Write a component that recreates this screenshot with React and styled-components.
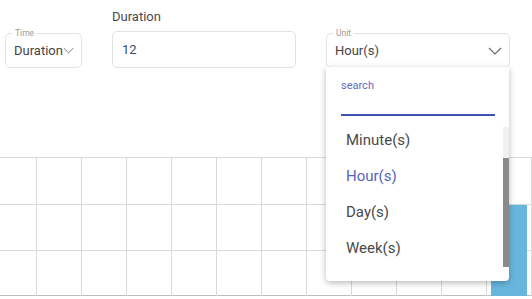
import React from "react";
import styled, { createGlobalStyle } from "styled-components";

const GlobalStyle = createGlobalStyle`
  html, body {
    margin: 0;
    padding: 0;
    background: #fff;
    font-family: Roboto, "Liberation Sans", sans-serif;
  }
`;

const Page = styled.div`
  position: relative;
  width: 532px;
  height: 299px;
  overflow: hidden;
  background: #fff;
`;

const Toolbar = styled.div`
  display: flex;
  align-items: flex-start;
  height: 158px;
  padding-left: 5px;
  box-sizing: border-box;
`;

const Outlined = styled.div`
  position: relative;
  margin-top: 33px;
  margin-left: ${(p) => p.$offset || 0}px;
  width: ${(p) => p.$width}px;
  height: 35px;
  box-sizing: border-box;
  border: 1px solid #e3e3e3;
  border-radius: 5px;
  display: flex;
  align-items: center;
  justify-content: ${(p) => (p.$tight ? "flex-start" : "space-between")};
  padding: 0 7px 0 8px;
  font-size: 13px;
  color: #444;
`;

const Legend = styled.span`
  position: absolute;
  top: -6px;
  left: 6px;
  padding: 0 3px;
  background: #fff;
  font-size: 8.5px;
  line-height: 10px;
  color: #9a9a9a;
`;

const FieldColumn = styled.div`
  display: flex;
  flex-direction: column;
  margin-left: ${(p) => p.$offset}px;
  padding-top: 9px;
`;

const Label = styled.div`
  font-size: 13px;
  color: #4a4a4a;
  height: 22px;
`;

const InputBox = styled.div`
  width: 184px;
  height: 37px;
  box-sizing: border-box;
  border: 1px solid #e3e3e3;
  border-radius: 5px;
  padding: 0 9px;
  display: flex;
  align-items: center;
  font-size: 13px;
  color: #3c4a72;
`;

const Chevron = ({ size = 14 }) => (
  <svg width={size} height={size / 2 + 1} viewBox="0 0 14 8" fill="none">
    <path d="M1 1 L7 7 L13 1" stroke="#666" strokeWidth="1.1" />
  </svg>
);

const Chart = styled.div`
  display: grid;
  grid-template-columns: 36px repeat(11, 45px) 1fr;
  grid-template-rows: repeat(3, 46px);
  border-top: 1px solid #d9d9d9;
  border-bottom: 1px solid #bdbdbd;
  height: 139px;
  box-sizing: border-box;
  margin-top: -1px;
`;

const Cell = styled.div`
  border-left: ${(p) => (p.$first ? "none" : "1px solid #d9d9d9")};
  border-top: ${(p) => (p.$topRow ? "none" : "1px solid #d9d9d9")};
  grid-column: ${(p) => p.$col};
  grid-row: ${(p) => p.$row};
`;

const Bar = styled.div`
  grid-column: 12;
  grid-row: 2 / 4;
  margin: 1px 4px 0 5px;
  background: #67b7dc;
  z-index: 1;
`;

const Menu = styled.div`
  position: absolute;
  left: 326px;
  top: 67px;
  width: 183px;
  height: 214px;
  background: #fff;
  border-radius: 0 0 4px 4px;
  box-shadow: 0 2px 6px rgba(0, 0, 0, 0.28);
  z-index: 5;
`;

const Search = styled.div`
  margin: 12px 14px 0 15px;
  border-bottom: 2px solid #3f51b5;
  height: 37px;
  box-sizing: border-box;
  font-size: 11px;
  color: #5c6bc0;
`;

const List = styled.div`
  display: flex;
  flex-direction: column;
  padding-top: 6px;
`;

const Item = styled.div`
  height: 36px;
  display: flex;
  align-items: center;
  padding-left: 20px;
  font-size: 15px;
  color: ${(p) => (p.$active ? "#5563c1" : "#4a4a4a")};
`;

const Track = styled.div`
  position: absolute;
  right: 0;
  top: 60px;
  width: 6px;
  height: 140px;
  background: #f0f0f0;
`;

const Thumb = styled.div`
  margin-top: 31px;
  height: 109px;
  background: #8a8a8a;
`;

const units = ["Minute(s)", "Hour(s)", "Day(s)", "Week(s)"];

const App = () => {
  const cells = [];
  for (let r = 1; r <= 3; r++) {
    for (let c = 1; c <= 13; c++) {
      cells.push(
        <Cell key={`${r}-${c}`} $row={r} $col={c} $first={c === 1} $topRow={r === 1} />
      );
    }
  }

  return (
    <Page>
      <GlobalStyle />
      <Toolbar>
        <Outlined $width={77} $tight>
          <Legend>Time</Legend>
          <span>Duration</span>
          <Chevron size={12} />
        </Outlined>
        <FieldColumn $offset={30}>
          <Label>Duration</Label>
          <InputBox>12</InputBox>
        </FieldColumn>
        <Outlined $width={184} $offset={30}>
          <Legend>Unit</Legend>
          <span>Hour(s)</span>
          <Chevron />
        </Outlined>
      </Toolbar>
      <Chart>
        {cells}
        <Bar />
      </Chart>
      <Menu>
        <Search>search</Search>
        <List>
          {units.map((u) => (
            <Item key={u} $active={u === "Hour(s)"}>
              {u}
            </Item>
          ))}
        </List>
        <Track>
          <Thumb />
        </Track>
      </Menu>
    </Page>
  );
};

export default App;
